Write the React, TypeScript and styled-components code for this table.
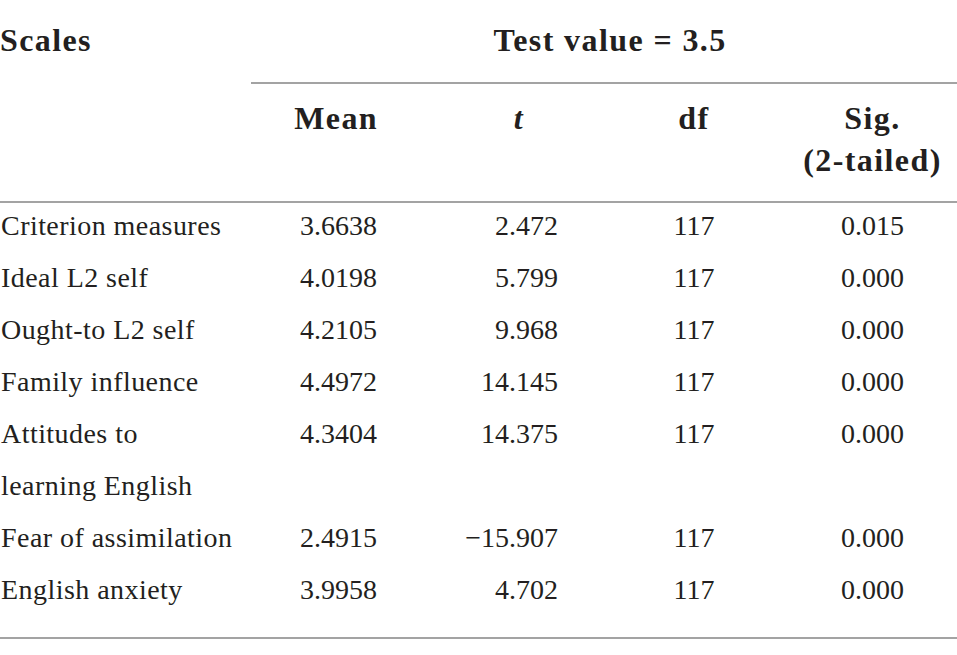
import styled, { createGlobalStyle } from 'styled-components'

const GlobalStyle = createGlobalStyle`
  html, body {
    margin: 0;
    padding: 0;
    background: #ffffff;
  }
  body {
    font-family: 'Liberation Serif', 'Times New Roman', serif;
    color: #231f20;
  }
`

const COLUMNS = '251px 149px 200px 188px 169px'

const Table = styled.div`
  width: 957px;
  display: flex;
  flex-direction: column;
`

const Section = styled.div`
  display: grid;
  grid-template-columns: ${COLUMNS};
`

const BodySection = styled(Section)`
  margin-top: -3px;
  padding-bottom: 21px;
`

const Rule = styled.div<{ $from?: number }>`
  grid-column: ${({ $from }) => $from ?? 1} / -1;
  height: 2px;
  background: #a3a3a3;
`

type Align = 'left' | 'right' | 'center'

const HeadCell = styled.div<{
  $align?: Align
  $pr?: number
  $pl?: number
  $span?: string
  $rows?: string
}>`
  grid-column: ${({ $span }) => $span ?? 'auto'};
  grid-row: ${({ $rows }) => $rows ?? 'auto'};
  font-weight: 700;
  font-size: 32px;
  letter-spacing: 1.4px;
  line-height: 42px;
  text-align: ${({ $align }) => $align ?? 'left'};
  padding-right: ${({ $pr }) => $pr ?? 0}px;
  padding-left: ${({ $pl }) => $pl ?? 0}px;
`

const TopHead = styled(HeadCell)`
  padding-top: 19px;
  padding-bottom: 21px;
`

const SubHead = styled(HeadCell)`
  padding-top: 13px;
  padding-bottom: 20px;
`

const Italic = styled.span`
  font-style: italic;
`

const Cell = styled.div<{ $align?: Align; $pr?: number }>`
  font-size: 28px;
  line-height: 52px;
  text-align: ${({ $align }) => $align ?? 'left'};
  padding-right: ${({ $pr }) => $pr ?? 0}px;
  white-space: pre-line;
`

const ScaleCell = styled(Cell)`
  padding-left: 1px;
  letter-spacing: 0.45px;
`

interface Row {
  scale: string
  mean: string
  t: string
  df: string
  sig: string
}

const rows: Row[] = [
  { scale: 'Criterion measures', mean: '3.6638', t: '2.472', df: '117', sig: '0.015' },
  { scale: 'Ideal L2 self', mean: '4.0198', t: '5.799', df: '117', sig: '0.000' },
  { scale: 'Ought-to L2 self', mean: '4.2105', t: '9.968', df: '117', sig: '0.000' },
  { scale: 'Family influence', mean: '4.4972', t: '14.145', df: '117', sig: '0.000' },
  { scale: 'Attitudes to\nlearning English', mean: '4.3404', t: '14.375', df: '117', sig: '0.000' },
  { scale: 'Fear of assimilation', mean: '2.4915', t: '\u221215.907', df: '117', sig: '0.000' },
  { scale: 'English anxiety', mean: '3.9958', t: '4.702', df: '117', sig: '0.000' },
]

const App = () => {
  return (
    <>
      <GlobalStyle />
      <Table>
        <Section>
          <TopHead $rows="1 / span 3" $span="1">
            Scales
          </TopHead>
          <TopHead $span="2 / -1" $align="center" $pl={12}>
            Test value = 3.5
          </TopHead>
          <Rule $from={2} />
          <SubHead $align="right" $pr={22}>
            Mean
          </SubHead>
          <SubHead $align="right" $pr={76}>
            <Italic>t</Italic>
          </SubHead>
          <SubHead $align="center">df</SubHead>
          <SubHead $align="center">
            Sig.
            <br />
            (2-tailed)
          </SubHead>
          <Rule />
        </Section>
        <BodySection>
          {rows.map((row) => (
            <>
              <ScaleCell key={row.scale}>{row.scale}</ScaleCell>
              <Cell $align="right" $pr={23}>
                {row.mean}
              </Cell>
              <Cell $align="right" $pr={42}>
                {row.t}
              </Cell>
              <Cell $align="center">{row.df}</Cell>
              <Cell $align="center">{row.sig}</Cell>
            </>
          ))}
        </BodySection>
        <Section>
          <Rule />
        </Section>
      </Table>
    </>
  )
}

export default App
